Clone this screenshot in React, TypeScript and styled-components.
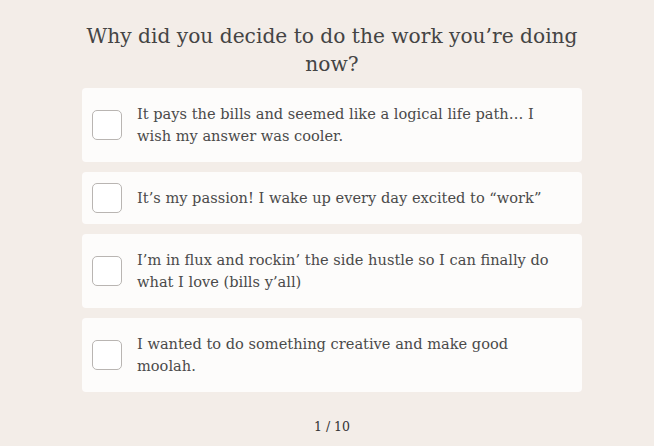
import * as React from 'react';
import styled, { createGlobalStyle } from 'styled-components';

const GlobalStyle = createGlobalStyle`
    body {
        margin: 0;
        background: #f3ede8;
        font-family: "DejaVu Serif", "Liberation Serif", serif;
        color: #444444;
    }
`;

const Page = styled.div`
    width: 654px;
    height: 446px;
    display: flex;
    flex-direction: column;
    align-items: center;
    padding: 22px 0 0 10px;
    box-sizing: border-box;
`;

const Question = styled.h1`
    margin: 0 0 10px;
    width: 500px;
    font-size: 20.2px;
    font-weight: normal;
    line-height: 28px;
    text-align: center;
    color: #444444;
`;

const OptionList = styled.div`
    width: 500px;
    display: flex;
    flex-direction: column;
    gap: 10px;
`;

const OptionCard = styled.label`
    display: flex;
    align-items: center;
    background: #fdfcfb;
    border-radius: 4px;
    padding: 15px 20px 15px 10px;
    cursor: pointer;
`;

const CheckBox = styled.span`
    flex: none;
    width: 28px;
    height: 28px;
    border: 1px solid #b9b5b2;
    border-radius: 5px;
    background: #ffffff;
    margin: -4px 15px -4px 0;
`;

const OptionText = styled.span`
    font-size: 14.6px;
    line-height: 22px;
    color: #4a4a4a;
`;

const Counter = styled.div`
    margin-top: 28px;
    font-size: 12.5px;
    line-height: 14px;
    color: #333333;
`;

const options = [
    'It pays the bills and seemed like a logical life path… I wish my answer was cooler.',
    'It’s my passion! I wake up every day excited to “work”',
    'I’m in flux and rockin’ the side hustle so I can finally do what I love (bills y’all)',
    'I wanted to do something creative and make good moolah.'
];

const App = () => {
    return (
        <>
            <GlobalStyle />
            <Page>
                <Question>Why did you decide to do the work you’re doing now?</Question>
                <OptionList>
                    {options.map(text => (
                        <OptionCard key={text}>
                            <CheckBox />
                            <OptionText>{text}</OptionText>
                        </OptionCard>
                    ))}
                </OptionList>
                <Counter>1 / 10</Counter>
            </Page>
        </>
    );
};

export default App;
